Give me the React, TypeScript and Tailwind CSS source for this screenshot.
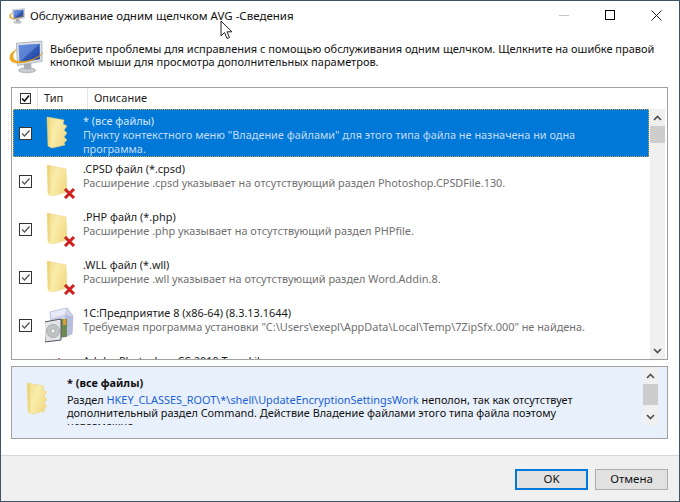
import React from "react";

const font = { fontFamily: '"Noto Sans", "Open Sans", sans-serif' };

function Defs() {
  return (
    <svg width="0" height="0" className="absolute">
      <defs>
        <linearGradient id="fg" x1="0" y1="0" x2="1" y2="0.5">
          <stop offset="0" stopColor="#f2dc88" />
          <stop offset="0.5" stopColor="#f9ecaa" />
          <stop offset="1" stopColor="#f3dc8a" />
        </linearGradient>
        <linearGradient id="mon" x1="0" y1="0" x2="1" y2="1">
          <stop offset="0" stopColor="#4f7fd8" />
          <stop offset="1" stopColor="#173a98" />
        </linearGradient>
      </defs>
    </svg>
  );
}

function Folder({ torn, x }: { torn?: boolean; x?: boolean }) {
  return (
    <svg width="32" height="36" viewBox="0 0 32 36" className="block">
      {torn ? (
        <path d="M2 2 L19 5 L18 9 L22 11 L19 15 L22 18 L19 22 L22 25 L19 28 L20 30 L7 33 L3 31 Z" fill="url(#fg)" stroke="#ead27a" strokeWidth="0.5" />
      ) : (
        <path d="M2 2 L21 6 L22 29 L7 33 L3 31 Z" fill="url(#fg)" stroke="#ead27a" strokeWidth="0.5" />
      )}
      <path d="M2.5 3 L5 2.5 L5.5 31 L3.5 30.5 Z" fill="#e8cc6c" opacity="0.55" />
      {x && <path d="M20 26 L29 35 M29 26 L20 35" stroke="#d0201c" strokeWidth="3" />}
    </svg>
  );
}

function BoxIcon() {
  return (
    <svg width="32" height="36" viewBox="2 0 32 36" className="block">
      <path d="M7 5 L24 1 L30 9 L29 27 L10 34 Z" fill="#cfd3ea" stroke="#a4aac8" strokeWidth="0.6" />
      <path d="M7 5 L24 1 L22 8 L8 12 Z" fill="#e8eaf6" stroke="#b4bad4" strokeWidth="0.5" />
      <path d="M22 8 L30 9 L29 27 L20 31 Z" fill="#b8bddc" />
      <rect x="18" y="12" width="6" height="18" fill="#6a8a50" />
      <rect x="20" y="12" width="3" height="6" fill="#e0a030" />
      <path d="M1 15 L18 12 L18 33 L2 35 Z" fill="#e4e4e8" stroke="#55555f" strokeWidth="1" />
      <circle cx="10" cy="24" r="6.5" fill="#bfc4c4" stroke="#8d9090" strokeWidth="0.6" />
      <circle cx="10" cy="24" r="2" fill="#fafafa" stroke="#888888" strokeWidth="0.5" />
    </svg>
  );
}

function PartialIcon() {
  return (
    <svg width="32" height="36" viewBox="0 0 32 36" className="block">
      <rect x="13" y="3" width="2" height="1" fill="#e46a6a" />
    </svg>
  );
}

function Monitor({ size }: { size: number }) {
  return (
    <svg width={size} height={size} viewBox="0 0 32 32" className="block">
      <ellipse cx="17" cy="28.5" rx="8" ry="2.4" fill="#c8ccd0" stroke="#8a8f94" strokeWidth="0.5" />
      <rect x="14" y="22" width="7" height="5.5" fill="#aab0b4" />
      <path d="M7 3 L31 1 L31 20 L8 24 Z" fill="#dde1e6" stroke="#8f959c" strokeWidth="0.6" />
      <path d="M9 5 L29 3.5 L29 18 L10 21.5 Z" fill="url(#mon)" />
      <path d="M9 5 L29 3.5 L16 15 L10 21.5 Z" fill="#86a8ea" opacity="0.45" />
      <path d="M7 9 C0 12 -1 19 4 21 C12 23 25 20 32 12 C27 17 17 21.5 8 20 C3 19 2 14 7 9 Z" fill="#efac1c" stroke="#dd9410" strokeWidth="0.5" />
    </svg>
  );
}

function Check() {
  return (
    <div className="w-[13px] h-[13px] border border-[#333333] bg-white flex items-center justify-center">
      <svg width="11" height="11" viewBox="0 0 11 11">
        <path d="M2 5.5 L4.5 8 L9.5 2.5" fill="none" stroke="#555555" strokeWidth="1.3" />
      </svg>
    </div>
  );
}

function Row({ icon, title, desc, selected }: { icon: React.ReactNode; title: string; desc: string; selected?: boolean }) {
  return (
    <div className={`h-[48px] shrink-0 flex border ${selected ? "bg-[#0078d7] border-dotted border-[#c8a24a]" : "border-transparent"}`}>
      <div className="w-[23px] shrink-0 flex items-center justify-center">
        <Check />
      </div>
      <div className="w-[42px] shrink-0 flex items-center pl-[8px]">{icon}</div>
      <div className="flex-1 pl-[4px] text-[10.9px] leading-[14px] pt-[4px] whitespace-nowrap">
        <div className={selected ? "text-[#d8e8f8]" : "text-[#1a1a1a]"}>{title}</div>
        <div className={selected ? "text-[#c4dcf4] whitespace-pre-line" : "text-[#707070] whitespace-pre-line"}>{desc}</div>
      </div>
    </div>
  );
}

function ScrollBar({ thumb }: { thumb: string }) {
  return (
    <div className="flex flex-col shrink-0 w-[15px] bg-[#f0f0f0]">
      <div className="h-[17px] flex items-center justify-center shrink-0">
        <svg width="9" height="6" viewBox="0 0 9 6"><path d="M1 5 L4.5 1.5 L8 5" fill="none" stroke="#505050" strokeWidth="1.7" /></svg>
      </div>
      <div className={`bg-[#cdcdcd] shrink-0 ${thumb}`} />
      <div className="flex-1" />
      <div className="h-[17px] flex items-center justify-center shrink-0">
        <svg width="9" height="6" viewBox="0 0 9 6"><path d="M1 1 L4.5 4.5 L8 1" fill="none" stroke="#505050" strokeWidth="1.7" /></svg>
      </div>
    </div>
  );
}

export default function App() {
  return (
    <div className="relative w-[680px] h-[502px] bg-white border border-[#3e5468] flex flex-col overflow-hidden text-black" style={font}>
      <Defs />
      {/* title bar */}
      <div className="h-[30px] shrink-0 flex items-center">
        <div className="ml-[8px] w-[16px] shrink-0"><Monitor size={16} /></div>
        <div className="ml-[5px] flex-1 text-[11.5px] leading-[16px] text-[#111111]">Обслуживание одним щелчком AVG -Сведения</div>
        <div className="flex items-center h-full pb-[2px]">
          <div className="w-[46px] flex justify-center"><div className="w-[10px] h-px bg-[#c4c4c4]" /></div>
          <div className="w-[46px] flex justify-center"><div className="w-[10px] h-[10px] border border-black" /></div>
          <div className="w-[46px] flex justify-center">
            <svg width="11" height="11" viewBox="0 0 11 11"><path d="M0.5 0.5 L10.5 10.5 M10.5 0.5 L0.5 10.5" stroke="#222222" strokeWidth="1" /></svg>
          </div>
        </div>
      </div>
      {/* intro */}
      <div className="h-[56px] shrink-0 flex pt-[9px]">
        <div className="ml-[8px] w-[35px] shrink-0"><Monitor size={34} /></div>
        <div className="ml-[6px] text-[11px] leading-[13px] pt-[2px] text-[#111111] whitespace-nowrap">
          Выберите проблемы для исправления с помощью обслуживания одним щелчком. Щелкните на ошибке правой<br />
          кнопкой мыши для просмотра дополнительных параметров.
        </div>
      </div>
      {/* list */}
      <div className="ml-[10px] mr-[11px] h-[273px] shrink-0 border border-[#a0a0a0] flex flex-col overflow-hidden">
        <div className="h-[21px] shrink-0 flex items-center text-[11px] text-[#222222] bg-white">
          <div className="w-[26px] h-full flex items-center justify-center border-r border-[#e5e5e5] pl-[2px]">
            <div className="w-[11px] h-[11px] border border-[#333333] flex items-center justify-center">
              <svg width="9" height="9" viewBox="0 0 9 9"><path d="M1 4.5 L3.5 7 L8 1.5" fill="none" stroke="#111111" strokeWidth="1.6" /></svg>
            </div>
          </div>
          <div className="w-[50px] h-full flex items-center pl-[6px] border-r border-[#e5e5e5]">Тип</div>
          <div className="pl-[6px]">Описание</div>
        </div>
        <div className="flex flex-1 min-h-0">
          <div className="flex-1 min-w-0 flex flex-col overflow-hidden pl-[1px]">
            <Row
              selected
              icon={<Folder torn />}
              title="* (все файлы)"
              desc={'Пункту контекстного меню "Владение файлами" для этого типа файла не назначена ни одна\nпрограмма.'}
            />
            <Row icon={<Folder x />} title=".CPSD файл (*.cpsd)" desc="Расширение .cpsd указывает на отсутствующий раздел Photoshop.CPSDFile.130." />
            <Row icon={<Folder x />} title=".PHP файл (*.php)" desc="Расширение .php указывает на отсутствующий раздел PHPfile." />
            <Row icon={<Folder x />} title=".WLL файл (*.wll)" desc="Расширение .wll указывает на отсутствующий раздел Word.Addin.8." />
            <Row icon={<BoxIcon />} title="1С:Предприятие 8 (x86-64) (8.3.13.1644)" desc={'Требуемая программа установки "C:\\Users\\exepl\\AppData\\Local\\Temp\\7ZipSfx.000" не найдена.'} />
            <Row icon={<PartialIcon />} title="Adobe Photoshop CC 2019 Type Library" desc="" />
          </div>
          <div className="pl-[1px] pr-[2px] flex"><ScrollBar thumb="h-[17px]" /></div>
        </div>
      </div>
      {/* details */}
      <div className="ml-[10px] mr-[11px] mt-[6px] h-[73px] shrink-0 border border-[#a0a0a0] bg-[#e8f0fb] flex">
        <div className="w-[54px] shrink-0 pl-[13px] pt-[14px]"><Folder torn /></div>
        <div className="w-[577px] shrink-0 h-[58px] overflow-hidden pt-[9px] pl-[1px] text-[10.9px] leading-[13px] text-[#111111] whitespace-nowrap">
          <div className="font-bold mb-[4px]">* (все файлы)</div>
          <div>
            Раздел <span className="text-[#1a62d6]">HKEY_CLASSES_ROOT\*\shell\UpdateEncryptionSettingsWork</span> неполон, так как отсутствует<br />
            дополнительный раздел Command. Действие Владение файлами этого типа файла поэтому<br />
            невозможно.
          </div>
        </div>
        <div className="h-[58px] flex"><ScrollBar thumb="h-[21px]" /></div>
      </div>
      <div className="flex-1" />
      {/* footer */}
      <div className="h-[46px] shrink-0 bg-[#f0f0f0] border-t border-[#d8d8d8] flex items-center justify-end gap-[7px] pr-[11px] pt-[1px] text-[11.5px] text-[#111111]">
        <button className="w-[73px] h-[21px] bg-[#e1e1e1] border-2 border-[#0078d7] flex items-center justify-center">OK</button>
        <button className="w-[73px] h-[21px] bg-[#e1e1e1] border border-[#adadad] flex items-center justify-center">Отмена</button>
      </div>
      {/* mouse cursor */}
      <svg width="13" height="20" viewBox="0 0 13 20" className="absolute left-[219px] top-[19px]">
        <path d="M1 1 L1 16 L4.5 12.5 L7 18.5 L9.5 17.5 L7 11.8 L12 11.8 Z" fill="#ffffff" stroke="#222222" strokeWidth="1" />
      </svg>
    </div>
  );
}
